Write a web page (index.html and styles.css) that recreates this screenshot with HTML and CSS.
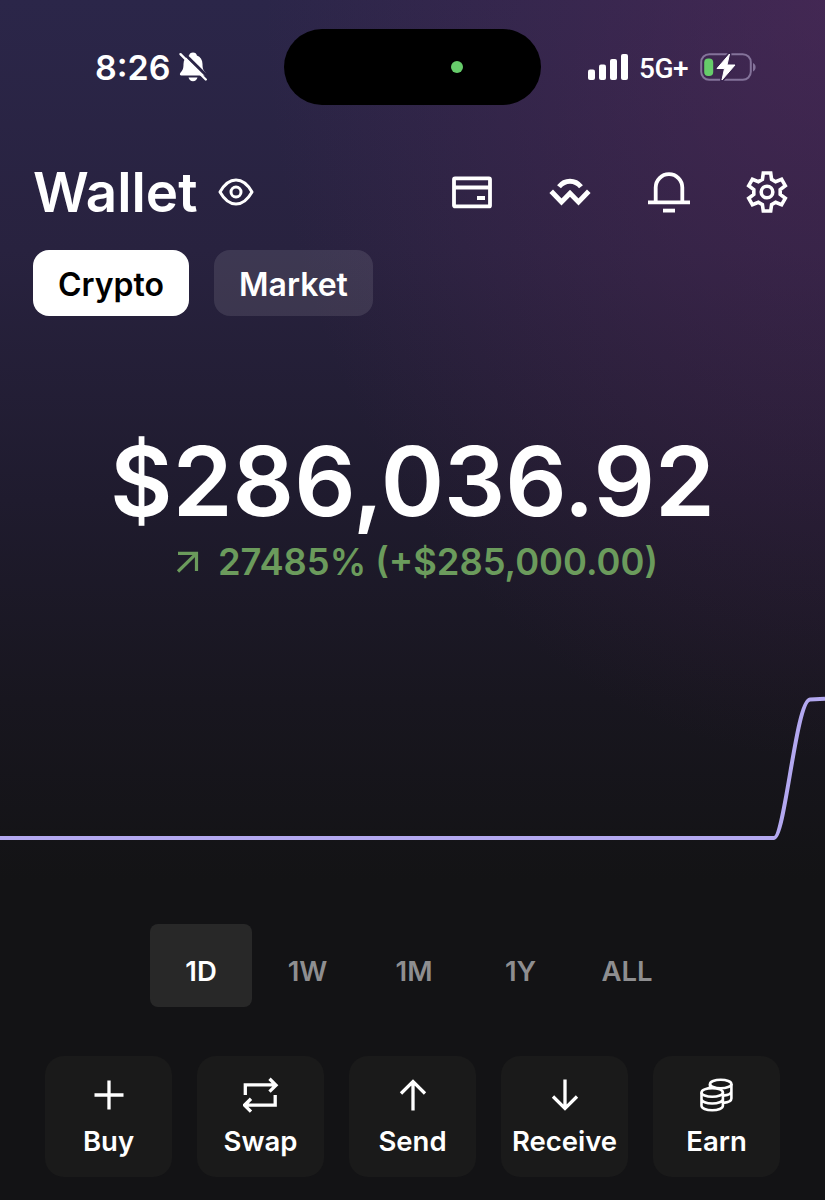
FILE: index.html
```html
<!DOCTYPE html>
<html lang="en">
<head>
	<meta charset="UTF-8">
	<title>Wallet</title>
	<link rel="stylesheet" href="styles.css">
</head>
<body>
	<div class="screen">
		<!-- phone status bar -->
		<div class="statusBar">
			<div class="clock">
				<span class="time">8:26</span>
				<svg class="silent" width="30" height="32" viewBox="0 0 30 32">
					<path d="M15 1.5c-2.2 0-3.600 1.300-3.900 2.900C7.500 5.800 5.500 8.800 5.500 13c0 5-1 6.500-3.200 9-.8 1-.4 2.500 1 2.500h23.400c1.400 0 1.800-1.500 1-2.500-2.200-2.500-3.200-4-3.200-9 0-4.200-2-7.200-5.600-8.600-.3-1.600-1.700-2.900-3.900-2.900zM10.500 26.500c.6 2.300 2.300 3.700 4.500 3.700s3.900-1.400 4.500-3.700z" fill="#fff"/>
					<path d="M4.500 1L30.500 26.500" stroke="#2b2547" stroke-width="3"/>
					<path d="M2.500 3.200L27.800 28.500" stroke="#fff" stroke-width="2.400" stroke-linecap="round"/>
				</svg>
			</div>
			<div class="island"><span class="cameraDot"></span></div>
			<div class="indicators">
				<svg width="41" height="28" viewBox="0 0 41 28" fill="#fff">
					<rect x="0" y="16.500" width="7" height="10.500" rx="2"/>
					<rect x="11" y="11.500" width="7" height="15.500" rx="2"/>
					<rect x="22" y="6" width="7" height="21" rx="2"/>
					<rect x="33" y="1" width="7" height="26" rx="2"/>
				</svg>
				<span class="network">5G+</span>
				<svg width="57" height="32" viewBox="0 0 57 32">
					<rect x="1.200" y="3.200" width="49.600" height="25.600" rx="8" fill="none" stroke="#84739a" stroke-width="2"/>
					<path d="M53 12c3.500 1.200 3.500 7.200 0 8.400z" fill="#84739a"/>
					<rect x="4.200" y="7.500" width="9" height="17.500" rx="4" fill="#66cc6a"/>
					<path d="M29.500 3L17 17.500h7.500L22 29l13-15h-8z" fill="#fff" stroke="#3b2650" stroke-width="4" stroke-linejoin="round"/>
					<path d="M29.500 3L17 17.500h7.500L22 29l13-15h-8z" fill="#fff" stroke="#fff" stroke-width="1" stroke-linejoin="round"/>
				</svg>
			</div>
		</div>

		<header class="header">
			<h1>Wallet</h1>
			<svg class="eye" width="36" height="30" viewBox="0 0 36 30" fill="none" stroke="#fff" stroke-width="3">
				<path d="M2 15C6.500 7 11.500 3 18 3s11.500 4 16 12c-4.500 8-9.500 12-16 12S6.500 23 2 15z" stroke-linejoin="round"/>
				<circle cx="18" cy="15" r="5"/>
			</svg>
			<nav class="tools">
				<svg width="42" height="42" viewBox="0 0 42 42" fill="none" stroke="#fff" stroke-width="3.800">
					<rect x="3" y="7.400" width="36" height="28" rx="1"/>
					<path d="M3 16.500h36"/>
					<path d="M26 27h8" stroke-width="4"/>
				</svg>
				<svg width="42" height="42" viewBox="0 0 42 42" fill="none" stroke="#fff" stroke-width="5">
					<path d="M10 15.800C16 8.400 26 8.400 32 15.800"/>
					<path d="M2.200 20.300L12.500 31L21 22.300L29.500 31L39.800 20.300"/>
				</svg>
				<svg width="42" height="42" viewBox="0 0 42 42" fill="none" stroke="#fff" stroke-width="3.800">
					<path d="M7.700 31V16.500a13.300 13.300 0 0 1 26.600 0V31"/>
					<path d="M0 31.300h42"/>
					<path d="M15 39.600h12"/>
				</svg>
				<svg width="42" height="42" viewBox="-21 -21 42 42" fill="none" stroke="#fff" stroke-width="3.600">
					<path d="M-4.600-12.600L-3.700-19H3.700L4.600-12.600L8.600-10.300L14.600-12.700L18.300-6.300L13.200-2.300V2.300L18.300 6.300L14.600 12.700L8.600 10.300L4.600 12.600L3.700 19H-3.700L-4.600 12.600L-8.600 10.300L-14.600 12.700L-18.300 6.300L-13.200 2.300V-2.300L-18.300-6.300L-14.600-12.700L-8.600-10.300z"/>
					<circle r="5.800"/>
				</svg>
			</nav>
		</header>

		<div class="tabs">
			<button class="tab selected">Crypto</button>
			<button class="tab">Market</button>
		</div>

		<!-- balance and daily change -->
		<section class="balance">
			<div class="amount">$286,036.92</div>
			<div class="change">
				<svg width="24" height="24" viewBox="0 0 24 24" fill="none" stroke="#6b9b5c" stroke-width="3.200">
					<path d="M2 3.300h18.500V21"/>
					<path d="M20.500 3.300L2 21.500"/>
				</svg>
				<span>27485% (+$285,000.00)</span>
			</div>
		</section>

		<svg class="chart" width="825" height="180" viewBox="0 0 825 180" fill="none" stroke="#b3a8f0" stroke-width="4">
			<path d="M0 158H774C785 158 796 20 810 19.500L825 18.800"/>
		</svg>

		<div class="ranges">
			<button class="range active">1D</button>
			<button class="range">1W</button>
			<button class="range">1M</button>
			<button class="range">1Y</button>
			<button class="range">ALL</button>
		</div>

		<div class="actions">
			<button class="action">
				<svg width="36" height="36" viewBox="0 0 36 36"><path d="M18 3.500v29M3.500 18h29"/></svg>
				<span>Buy</span>
			</button>
			<button class="action">
				<svg width="36" height="36" viewBox="0 0 36 36"><path d="M2.300 18V7.800H33M26.500 1.800L33 8.200L26.500 14.600M32.200 18V28.200H1.500M8 21.800L1.500 28.200L8 34.600"/></svg>
				<span>Swap</span>
			</button>
			<button class="action">
				<svg width="36" height="36" viewBox="0 0 36 36"><path d="M18 33.500V5M6 16.500L18 4.500L30 16.500"/></svg>
				<span>Send</span>
			</button>
			<button class="action">
				<svg width="36" height="36" viewBox="0 0 36 36"><path d="M18 2.500V31M6 19.500L18 31.500L30 19.500"/></svg>
				<span>Receive</span>
			</button>
			<button class="action">
				<svg class="coins" width="36" height="36" viewBox="0 0 36 36">
					<ellipse cx="21.700" cy="7" rx="10.700" ry="4.300"/>
					<path d="M11 7v4M32.400 7v14.500c0 2.200-3.300 3.800-8 4.400M32.400 14.200c0 2.200-3.300 3.800-8 4.400"/>
					<ellipse cx="13.200" cy="15.400" rx="10.700" ry="4.300"/>
					<path d="M2.500 15.400v13.400c0 2.500 4.700 4.500 10.700 4.500s10.700-2 10.700-4.500V15.400M2.500 22c0 2.500 4.700 4.500 10.700 4.500s10.700-2 10.700-4.500"/>
				</svg>
				<span>Earn</span>
			</button>
		</div>
	</div>
</body>
</html>
```
FILE: styles.css
```css
*{
	box-sizing: border-box;
}
body{
	margin: 0;
	background-color: #131315;
	color: #fff;
	font-family: Inter, "Liberation Sans", sans-serif;
}
button{
	border: none;
	padding: 0;
	color: inherit;
	font-family: inherit;
}
svg{
	display: block;
	flex-shrink: 0;
}
.screen{
	width: 825px;
	height: 1200px;
	overflow: hidden;
	display: flex;
	flex-direction: column;
	background-image:
		radial-gradient(ellipse 560px 760px at 100% 0, rgba(100, 42, 98, 0.42), rgba(100, 42, 98, 0)),
		linear-gradient(#2b2649 0, #28223f 250px, #1f1b2e 500px, #18161f 700px, #131315 880px);
}

/* status bar */
.statusBar{
	height: 105px;
	padding-top: 29px;
	display: grid;
	grid-template-columns: 284px 257px 1fr;
	align-items: center;
}
.clock{
	padding-left: 95px;
	display: flex;
	align-items: center;
}
.time{
	width: 83px;
	font-size: 34px;
	font-weight: 600;
}
.island{
	height: 76px;
	border-radius: 38px;
	background-color: #000;
	display: flex;
	align-items: center;
	padding-left: 167px;
}
.cameraDot{
	width: 12px;
	height: 12px;
	border-radius: 50%;
	background-color: #66cc6a;
}
.indicators{
	padding-left: 47px;
	display: flex;
	align-items: center;
}
.network{
	width: 61px;
	margin: 3px 0 0 10px;
	font-family: Roboto, sans-serif;
	font-size: 28px;
	font-weight: 500;
	letter-spacing: -0.500px;
}

/* title and toolbar */
.header{
	height: 145px;
	padding: 29px 37px 0 33px;
	display: flex;
	align-items: center;
}
h1{
	margin: 0;
	font-size: 54.700px;
	font-weight: 600;
}
.eye{
	margin-left: 21px;
}
.tools{
	margin-left: auto;
	display: flex;
	gap: 56.500px;
}
.tabs{
	padding-left: 33px;
	display: flex;
	gap: 25px;
}
.tab{
	width: 156px;
	height: 66px;
	padding-top: 2px;
	border-radius: 16px;
	background-color: rgba(255, 255, 255, 0.1);
	font-size: 32px;
	font-weight: 600;
}
.tab:last-child{
	width: 159px;
}
.tab.selected{
	background-color: #fff;
	color: #000;
}

/* balance */
.balance{
	height: 364px;
	padding-top: 107px;
	text-align: center;
}
.amount{
	font-size: 96.200px;
	font-weight: 600;
	line-height: 117px;
}
.change{
	padding-left: 9px;
	display: flex;
	justify-content: center;
	align-items: center;
	gap: 18px;
	color: #6b9b5c;
	font-size: 36.300px;
	font-weight: 600;
	line-height: 44px;
}

/* time range picker */
.ranges{
	margin-top: 64px;
	padding-left: 3px;
	display: flex;
	justify-content: center;
	gap: 4px;
}
.range{
	width: 102.500px;
	height: 83px;
	padding-top: 10px;
	border-radius: 8px;
	background: none;
	color: #8e8e90;
	font-size: 27.500px;
	font-weight: 600;
}
.range.active{
	background-color: #282828;
	color: #fff;
}

/* bottom actions */
.actions{
	margin-top: 49px;
	display: flex;
	justify-content: center;
	gap: 24.500px;
}
.action{
	width: 127.500px;
	height: 121px;
	border-radius: 19px;
	background-color: #1a1a1a;
	display: flex;
	flex-direction: column;
	align-items: center;
	padding-top: 21px;
	font-size: 27.500px;
	font-weight: 600;
	line-height: 34px;
}
.action svg{
	margin-bottom: 11px;
	fill: none;
	stroke: #fff;
	stroke-width: 3.300;
}
.action .coins{
	stroke-width: 2.600;
}
```
